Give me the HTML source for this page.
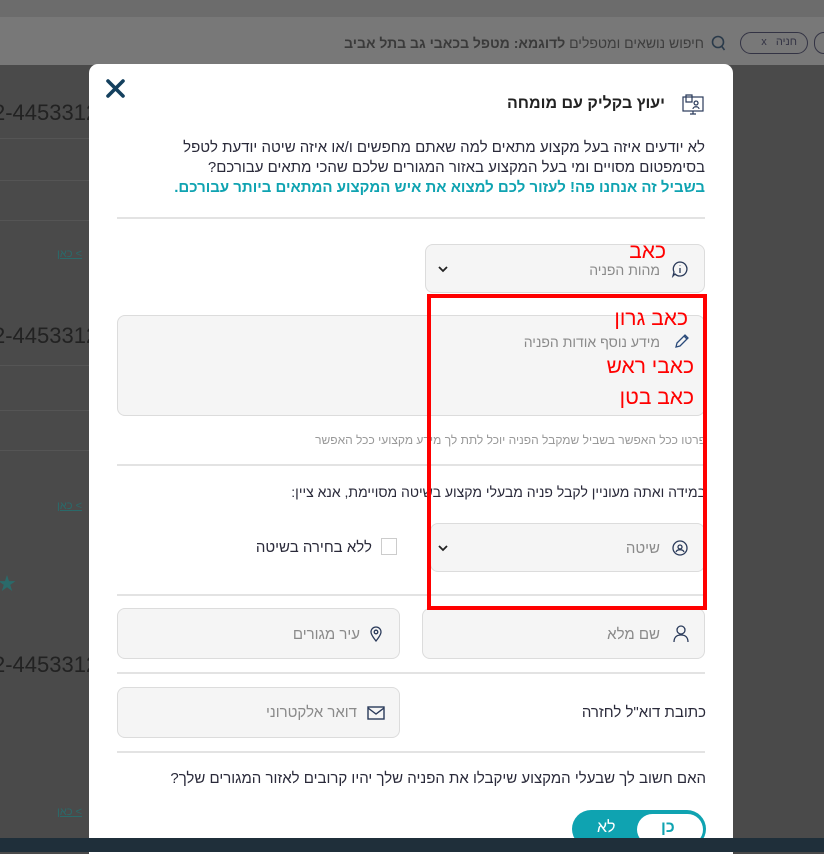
<!DOCTYPE html>
<html><head><meta charset="utf-8"><style>
*{margin:0;padding:0;box-sizing:border-box}
body{width:824px;height:852px;overflow:hidden;position:relative;background:#4a4a4a;font-family:"Liberation Sans","Noto Sans CJK SC",sans-serif;}
.a{position:absolute}
.t{direction:rtl;white-space:nowrap}
.box{position:absolute;background:#f5f5f5;border:1px solid #dcdcdc;border-radius:8px}
.hr{position:absolute;height:2px;background:#e3e3e3;left:117px;width:588px}
.ph{color:#8a8a8a;font-size:14px}
.red{color:#f00;font-size:21px}
.bgl{position:absolute;left:0;width:89px;height:1px;background:#555}
</style></head><body>
<div class="a" style="left:0;top:0;width:824px;height:17px;background:#6c6c6c"></div>
<div class="a" style="left:0;top:17px;width:824px;height:48px;background:#787878"></div>
<div class="a t" style="right:120px;top:35px;font-size:14px;color:#3d3d3d">חיפוש נושאים ומטפלים <b style="color:#3a3a3a">לדוגמא: מטפל בכאבי גב בתל אביב</b></div>
<svg class="a" style="left:711px;top:35px" width="15" height="16" viewBox="0 0 15 16" fill="none" stroke="#2a3a4a" stroke-width="1.6"><circle cx="7" cy="7" r="5.5"/><path d="M10.5 11l3 4"/></svg>
<div class="a" style="left:740px;top:32px;width:68px;height:22px;border:1px solid #334;border-radius:11px;font-size:11px;color:#334;direction:rtl;padding:3px 10px">חניה &nbsp; x</div>
<div class="a" style="left:814px;top:32px;width:20px;height:22px;border:1px solid #334;border-radius:11px"></div>
<div class="a" style="left:-7px;top:100px;font-size:22px;color:#222">2-4453312</div>
<div class="a" style="left:-7px;top:323px;font-size:22px;color:#222">2-4453312</div>
<div class="a" style="left:-7px;top:652px;font-size:22px;color:#222">2-4453312</div>
<div class="bgl" style="top:138px"></div><div class="bgl" style="top:180px"></div><div class="bgl" style="top:220px"></div>
<div class="bgl" style="top:365px"></div><div class="bgl" style="top:410px"></div><div class="bgl" style="top:450px"></div>
<div class="a" style="left:57px;top:248px;font-size:11px;color:#2a6a6a;text-decoration:underline">כאן &lt;</div>
<div class="a" style="left:57px;top:500px;font-size:11px;color:#2a6a6a;text-decoration:underline">כאן &lt;</div>
<div class="a" style="left:57px;top:806px;font-size:11px;color:#2a6a6a;text-decoration:underline">כאן &lt;</div>
<div class="a" style="left:-2px;top:570px;font-size:18px;color:#2a6a6a">★</div>

<div class="a" style="left:89px;top:64px;width:644px;height:790px;background:#fff;border-radius:9px 9px 0 0"></div>
<svg class="a" style="left:106px;top:79px" width="19" height="19" viewBox="0 0 19 19" fill="none" stroke="#14405e" stroke-width="3.6" stroke-linecap="round"><path d="M2 2l15 15M17 2L2 17"/></svg>
<svg class="a" style="left:681px;top:93px" width="24" height="24" viewBox="0 0 24 24" fill="none" stroke="#2a3a5a" stroke-width="1.2"><rect x="2" y="4" width="20" height="14"/><path d="M9 21h6M12 18v3M5 2h6v7H5zM15 8a2 2 0 1 0 0.1 0M12 16c0-3 6-3 6 0"/></svg>
<div class="a t" style="right:159px;top:95px;font-size:16px;font-weight:bold;color:#222">יעוץ בקליק עם מומחה</div>
<div class="a t" style="right:119px;top:138px;font-size:15px;line-height:20px;color:#2a2a3a">לא יודעים איזה בעל מקצוע מתאים למה שאתם מחפשים ו/או איזה שיטה יודעת לטפל<br>בסימפטום מסויים ומי בעל המקצוע באזור המגורים שלכם שהכי מתאים עבורכם?<br><b style="color:#0fa3b1">בשביל זה אנחנו פה! לעזור לכם למצוא את איש המקצוע המתאים ביותר עבורכם.</b></div>
<div class="hr" style="top:217px"></div>

<div class="box" style="left:425px;top:244px;width:280px;height:49px"></div>
<svg class="a" style="left:671px;top:260px" width="18" height="18" viewBox="0 0 18 18" fill="none" stroke="#2a3a5a" stroke-width="1.3"><path d="M9 2a7 7 0 1 1-5 12l-2 2 1-4A7 7 0 0 1 9 2zM9 8v5M9 5.5v.5"/></svg>
<div class="a t ph" style="right:164px;top:262px">מהות הפניה</div>
<svg class="a" style="left:438px;top:266px" width="10" height="7" viewBox="0 0 10 7" fill="none" stroke="#222" stroke-width="1.8"><path d="M1 1l4 4 4-4"/></svg>
<div class="a t red" style="right:158px;top:240px">כאב</div>

<div class="box" style="left:117px;top:315px;width:588px;height:101px"></div>
<svg class="a" style="left:674px;top:333px" width="16" height="16" viewBox="0 0 16 16" fill="none" stroke="#2a4a7a" stroke-width="1.3"><path d="M2 14l1-4 8-8 3 3-8 8zM10 3l3 3"/></svg>
<div class="a t ph" style="right:164px;top:334px">מידע נוסף אודות הפניה</div>
<div class="a t red" style="right:136px;top:307px">כאב גרון</div>
<div class="a t red" style="right:130px;top:355px">כאבי ראש</div>
<div class="a t red" style="right:130px;top:386px">כאב בטן</div>
<div class="a t" style="right:118px;top:433px;font-size:12px;color:#999">פרטו ככל האפשר בשביל שמקבל הפניה יוכל לתת לך מידע מקצועי ככל האפשר</div>
<div class="hr" style="top:464px"></div>
<div class="a t" style="right:118px;top:484px;font-size:14px;color:#2a2a3a">במידה ואתה מעוניין לקבל פניה מבעלי מקצוע בשיטה מסויימת, אנא ציין:</div>

<div class="box" style="left:430px;top:523px;width:275px;height:49px"></div>
<svg class="a" style="left:671px;top:539px" width="18" height="18" viewBox="0 0 18 18" fill="none" stroke="#2a3a5a" stroke-width="1.3"><circle cx="9" cy="9" r="7"/><circle cx="9" cy="8" r="2"/><path d="M5 13c1-3 7-3 8 0"/></svg>
<div class="a t ph" style="right:164px;top:540px;font-size:15px">שיטה</div>
<svg class="a" style="left:438px;top:545px" width="10" height="7" viewBox="0 0 10 7" fill="none" stroke="#222" stroke-width="1.8"><path d="M1 1l4 4 4-4"/></svg>
<div class="a" style="left:381px;top:538px;width:16px;height:17px;border:1px solid #ccc"></div>
<div class="a t" style="right:452px;top:539px;font-size:15px;color:#2a2a3a">ללא בחירה בשיטה</div>
<div class="hr" style="top:594px"></div>

<div class="box" style="left:422px;top:608px;width:283px;height:51px"></div>
<svg class="a" style="left:673px;top:625px" width="16" height="18" viewBox="0 0 16 18" fill="none" stroke="#2a3a5a" stroke-width="1.3"><circle cx="8" cy="5" r="4"/><path d="M1 17c0-5 3-7 7-7s7 2 7 7"/></svg>
<div class="a t ph" style="right:164px;top:626px;font-size:15px">שם מלא</div>
<div class="box" style="left:117px;top:608px;width:283px;height:51px"></div>
<svg class="a" style="left:370px;top:626px" width="12" height="16" viewBox="0 0 12 16" fill="none" stroke="#2a3a5a" stroke-width="1.3"><path d="M6 15C2 10 1 8 1 6a5 5 0 0 1 10 0c0 2-1 4-5 9z"/><circle cx="6" cy="6" r="1.8"/></svg>
<div class="a t ph" style="right:464px;top:626px;font-size:15px">עיר מגורים</div>
<div class="hr" style="top:672px"></div>
<div class="a t" style="right:118px;top:704px;font-size:15px;color:#2a2a3a">כתובת דוא"ל לחזרה</div>
<div class="box" style="left:117px;top:687px;width:283px;height:51px"></div>
<svg class="a" style="left:367px;top:706px" width="18" height="14" viewBox="0 0 18 14" fill="none" stroke="#2a3a5a" stroke-width="1.4"><rect x="1" y="1" width="16" height="12"/><path d="M1 2l8 6 8-6"/></svg>
<div class="a t ph" style="right:467px;top:704px;font-size:15px">דואר אלקטרוני</div>
<div class="hr" style="top:751px"></div>
<div class="a t" style="right:118px;top:770px;font-size:15px;color:#2a2a3a">האם חשוב לך שבעלי המקצוע שיקבלו את הפניה שלך יהיו קרובים לאזור המגורים שלך?</div>
<div class="a" style="left:572px;top:810px;width:134px;height:38px;border-radius:19px;background:#0fa3b1"></div>
<div class="a" style="left:637px;top:814px;width:66px;height:31px;border-radius:16px;background:#fff"></div>
<div class="a" style="left:597px;top:819px;font-size:16px;color:#fff">לא</div>
<div class="a" style="left:661px;top:819px;font-size:16px;color:#0fa3b1;font-weight:bold">כן</div>
<div class="a" style="left:0;top:838px;width:824px;height:14px;background:#1f2f3a"></div>
<div class="a" style="left:427px;top:294px;width:280px;height:316px;border:4px solid #f00"></div>
</body></html>
